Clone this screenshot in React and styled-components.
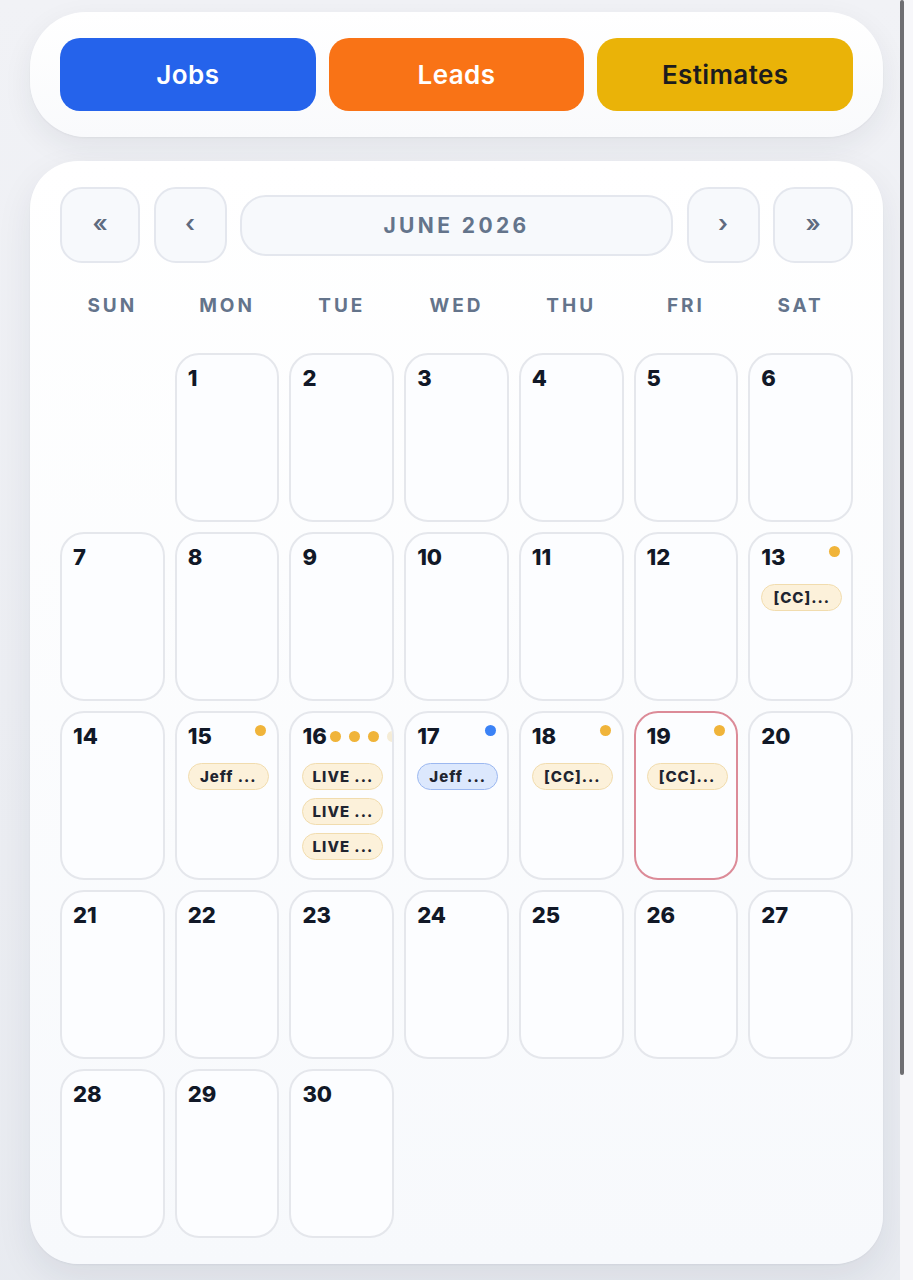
import React from 'react'
import styled, { createGlobalStyle } from 'styled-components'

/******************************************************************************/
// Data
/******************************************************************************/

const WEEKDAYS = ['SUN', 'MON', 'TUE', 'WED', 'THU', 'FRI', 'SAT']

const FIRST_WEEKDAY = 1 // June 1 2026 is a Monday
const DAYS_IN_MONTH = 30
const TODAY = 19

const EVENTS = {
  13: { dots: ['amber'], chips: [{ label: '[CC]...', tone: 'amber' }] },
  15: { dots: ['amber'], chips: [{ label: 'Jeff ...', tone: 'amber' }] },
  16: {
    dots: ['amber', 'amber', 'amber', 'pale'],
    chips: [
      { label: 'LIVE ...', tone: 'amber' },
      { label: 'LIVE ...', tone: 'amber' },
      { label: 'LIVE ...', tone: 'amber' }
    ]
  },
  17: { dots: ['blue'], chips: [{ label: 'Jeff ...', tone: 'blue' }] },
  18: { dots: ['amber'], chips: [{ label: '[CC]...', tone: 'amber' }] },
  19: { dots: ['amber'], chips: [{ label: '[CC]...', tone: 'amber' }] }
}

const DOT_COLORS = {
  amber: '#f0b43a',
  blue: '#3b82f6',
  pale: '#f5ecd6'
}

const CHIP_TONES = {
  amber: { bg: '#fcf1da', border: '#f1dcae' },
  blue: { bg: '#dce8fd', border: '#9cb8f0' }
}

const TABS = [
  { label: 'Jobs', bg: '#2563eb', fg: '#ffffff' },
  { label: 'Leads', bg: '#f97316', fg: '#ffffff' },
  { label: 'Estimates', bg: '#eab308', fg: '#1c1c1e' }
]

/******************************************************************************/
// Styles
/******************************************************************************/

const GlobalStyle = createGlobalStyle`
  html, body {
    margin: 0;
    padding: 0;
    scrollbar-width: none;
  }
  body::-webkit-scrollbar, html::-webkit-scrollbar {
    display: none;
  }
  body {
    font-family: Inter, "Noto Sans", "DejaVu Sans", sans-serif;
    background: linear-gradient(180deg, #f1f2f6 0%, #e6e9ef 100%);
    min-height: 100vh;
  }
`

const Page = styled.div`
  padding: 12px 30px 40px;
  display: flex;
  flex-direction: column;
  gap: 24px;
  min-height: 1500px;
`

const TabCard = styled.div`
  background: linear-gradient(180deg, #ffffff 0%, #f9fafc 100%);
  border-radius: 56px;
  padding: 26px 30px;
  box-shadow: 0 10px 30px rgba(30, 41, 59, 0.07), 0 1px 2px rgba(30, 41, 59, 0.05);
  display: grid;
  grid-template-columns: repeat(3, 1fr);
  gap: 13px;
`

const TabButton = styled.button`
  height: 73px;
  border: none;
  border-radius: 20px;
  background: ${p => p.$bg};
  color: ${p => p.$fg};
  font-family: inherit;
  font-size: 26px;
  font-weight: 600;
  letter-spacing: 0.4px;
  cursor: pointer;
`

const CalendarCard = styled.div`
  background: linear-gradient(180deg, #ffffff 0%, #f7f9fc 100%);
  border-radius: 48px;
  padding: 26px 30px;
  box-shadow: 0 14px 36px rgba(30, 41, 59, 0.08), 0 1px 2px rgba(30, 41, 59, 0.05);
`

const NavRow = styled.div`
  display: flex;
  align-items: center;
  gap: 13.5px;
`

const NavButton = styled.button`
  flex: 0 0 ${p => p.$wide ? 80 : 73}px;
  height: 76px;
  border: 2px solid #e4e7ee;
  border-radius: 22px;
  background: #f7f9fc;
  color: #5f6b7f;
  font-family: inherit;
  font-size: 24px;
  font-weight: 600;
  display: flex;
  align-items: center;
  justify-content: center;
  padding: 0 0 3px;
  cursor: pointer;
`

const MonthTitle = styled.div`
  flex: 1;
  height: 61px;
  box-sizing: border-box;
  border: 2px solid #e4e7ee;
  border-radius: 26px;
  background: #f7f9fc;
  color: #64748b;
  font-size: 21px;
  font-weight: 700;
  letter-spacing: 3.4px;
  display: flex;
  align-items: center;
  justify-content: center;
`

const WeekdayRow = styled.div`
  display: grid;
  grid-template-columns: repeat(7, 1fr);
  gap: 10px;
  margin: 31px 0 35px;
`

const Weekday = styled.div`
  text-align: center;
  line-height: 24px;
  font-size: 19px;
  font-weight: 700;
  letter-spacing: 3px;
  color: #64748b;
`

const DayGrid = styled.div`
  display: grid;
  grid-template-columns: repeat(7, 1fr);
  grid-auto-rows: 169px;
  gap: 10px;
`

const Blank = styled.div``

const DayCell = styled.div`
  box-sizing: border-box;
  border: 2px solid ${p => p.$today ? '#dc8b98' : '#e5e7ec'};
  border-radius: 24px;
  background: #fcfdff;
  padding: 10px 10px 12px 11px;
  overflow: hidden;
  display: flex;
  flex-direction: column;
`

const DayHead = styled.div`
  display: flex;
  align-items: flex-start;
  gap: 3px;
  min-height: 26px;
`

const DayNumber = styled.span`
  font-size: 22px;
  line-height: 26px;
  font-weight: 800;
  color: #111827;
  flex-shrink: 0;
`

const Dots = styled.div`
  margin-left: auto;
  display: flex;
  gap: 8px;
  flex-shrink: 0;
  align-self: ${p => p.$many ? 'center' : 'flex-start'};
  margin-top: ${p => p.$many ? 0 : 2}px;
  padding-right: ${p => p.$many ? 0 : 1}px;
`

const Dot = styled.span`
  width: 11px;
  height: 11px;
  border-radius: 50%;
  background: ${p => DOT_COLORS[p.$color]};
`

const Chips = styled.div`
  display: flex;
  flex-direction: column;
  gap: 8px;
  margin-top: 14px;
`

const Chip = styled.div`
  box-sizing: border-box;
  height: 27px;
  width: 81px;
  border-radius: 14px;
  border: 1.5px solid ${p => CHIP_TONES[p.$tone].border};
  background: ${p => CHIP_TONES[p.$tone].bg};
  color: #1f2430;
  font-size: 15px;
  font-weight: 800;
  letter-spacing: 1px;
  display: flex;
  align-items: center;
  justify-content: center;
  white-space: nowrap;
`

const ScrollTrack = styled.div`
  position: fixed;
  top: 0;
  right: 0;
  width: 13px;
  height: 100vh;
  background: rgba(248, 248, 250, 0.85);
  pointer-events: none;
`

const ScrollThumb = styled.div`
  width: 4px;
  height: 1075px;
  border-radius: 2px;
  background: #6e6e72;
`

/******************************************************************************/
// Components
/******************************************************************************/

const Day = ({ day }) => {
  const events = EVENTS[day]
  return <DayCell $today={day === TODAY}>
    <DayHead>
      <DayNumber>{day}</DayNumber>
      {events && <Dots $many={events.dots.length > 1}>
        {events.dots.map((c, i) => <Dot key={i} $color={c}/>)}
      </Dots>}
    </DayHead>
    {events && <Chips>
      {events.chips.map((c, i) => <Chip key={i} $tone={c.tone}>{c.label}</Chip>)}
    </Chips>}
  </DayCell>
}

const App = () => {
  const days = Array.from({ length: DAYS_IN_MONTH }, (_, i) => i + 1)
  const blanks = Array.from({ length: FIRST_WEEKDAY }, (_, i) => i)

  return <>
    <GlobalStyle/>
    <Page>
      <TabCard>
        {TABS.map(t => <TabButton key={t.label} $bg={t.bg} $fg={t.fg}>{t.label}</TabButton>)}
      </TabCard>

      <CalendarCard>
        <NavRow>
          <NavButton $wide>«</NavButton>
          <NavButton>‹</NavButton>
          <MonthTitle>JUNE 2026</MonthTitle>
          <NavButton>›</NavButton>
          <NavButton $wide>»</NavButton>
        </NavRow>

        <WeekdayRow>
          {WEEKDAYS.map(w => <Weekday key={w}>{w}</Weekday>)}
        </WeekdayRow>

        <DayGrid>
          {blanks.map(b => <Blank key={`b${b}`}/>)}
          {days.map(d => <Day key={d} day={d}/>)}
        </DayGrid>
      </CalendarCard>
    </Page>
    <ScrollTrack><ScrollThumb/></ScrollTrack>
  </>
}

/******************************************************************************/
// Exports
/******************************************************************************/

export default App
